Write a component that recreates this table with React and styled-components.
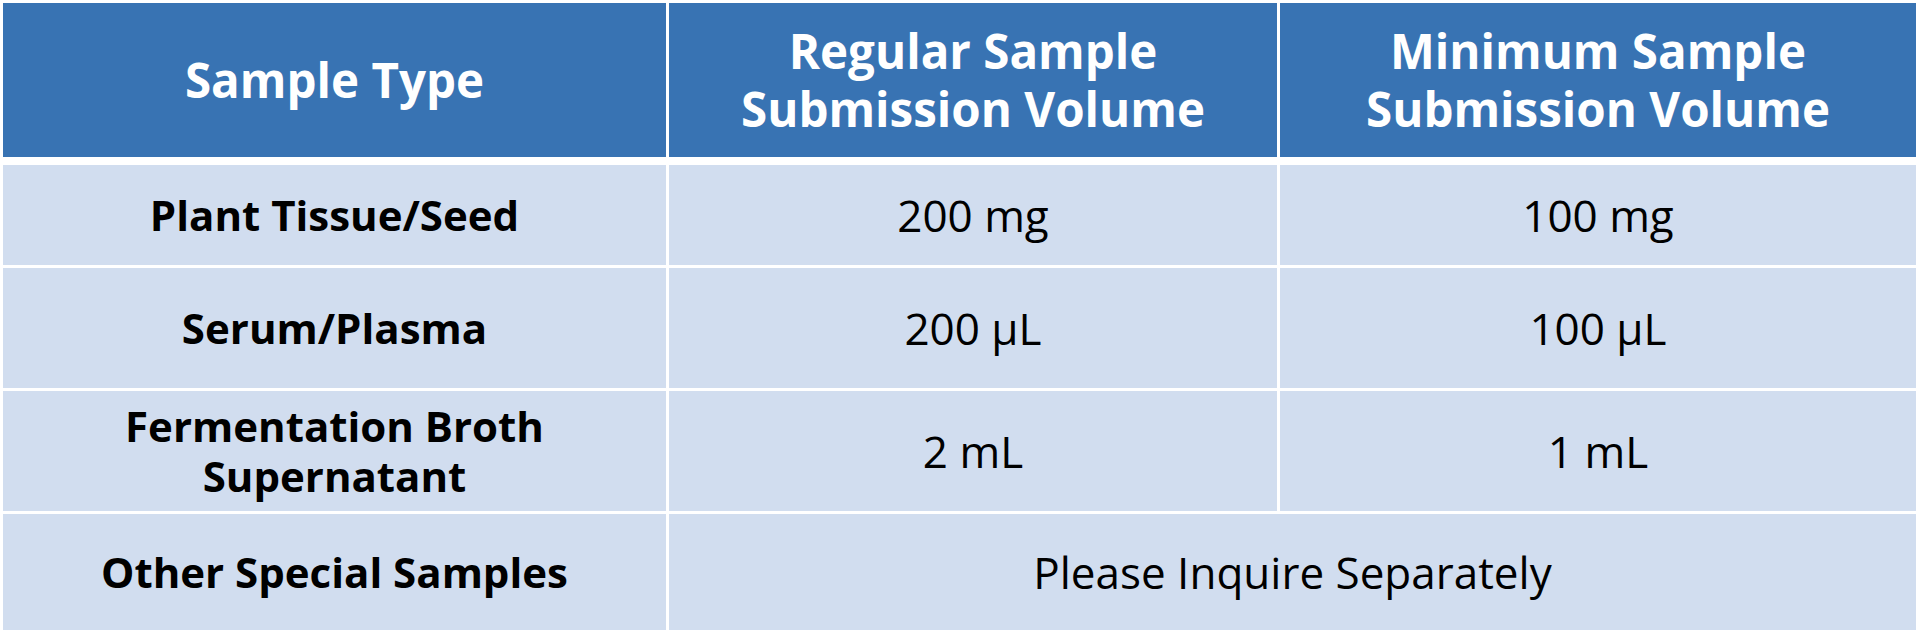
import React from 'react'
import styled, { createGlobalStyle } from 'styled-components'

const GlobalStyle = createGlobalStyle`
    html, body {
        margin: 0;
        padding: 0;
        background: #ffffff;
    }

    body {
        font-family: "Open Sans", "Noto Sans", "Liberation Sans", sans-serif;
    }
`

const Table = styled.div`
    display: grid;
    grid-template-columns: 663px 608px 636px;
    grid-template-rows: 159px 100px 120px 120px 116px;
    gap: 3px;
    margin: 3px;
    width: 1913px;
`

const Cell = styled.div`
    display: flex;
    align-items: center;
    justify-content: center;
    text-align: center;
    background: #d1ddef;
    color: #000000;
    font-size: ${props => props.bold ? '42px' : '44px'};
    line-height: 50px;
    font-weight: ${props => props.bold ? 700 : 400};
    grid-column: ${props => props.span ? `span ${props.span}` : 'auto'};
`

const HeadCell = styled(Cell)`
    background: #3873b3;
    color: #ffffff;
    font-size: 47.5px;
    line-height: 58px;
    font-weight: 700;
    margin-bottom: 5px;
`

const rows = [
    { type: 'Plant Tissue/Seed', regular: '200 mg', minimum: '100 mg' },
    { type: 'Serum/Plasma', regular: '200 μL', minimum: '100 μL' },
    { type: ['Fermentation Broth', 'Supernatant'], regular: '2 mL', minimum: '1 mL' },
]

function Lines({ text }) {
    if (!Array.isArray(text)) return text
    return text.map((line, i) => (
        <span key={i}>{line}{i < text.length - 1 && <br />}</span>
    ))
}

export default function App() {
    return (
        <>
            <GlobalStyle />
            <Table>
                <HeadCell>Sample Type</HeadCell>
                <HeadCell>Regular Sample<br />Submission Volume</HeadCell>
                <HeadCell>Minimum Sample<br />Submission Volume</HeadCell>

                {rows.map((row, i) => (
                    <React.Fragment key={i}>
                        <Cell bold><div><Lines text={row.type} /></div></Cell>
                        <Cell>{row.regular}</Cell>
                        <Cell>{row.minimum}</Cell>
                    </React.Fragment>
                ))}

                <Cell bold>Other Special Samples</Cell>
                <Cell span={2}>Please Inquire Separately</Cell>
            </Table>
        </>
    )
}
